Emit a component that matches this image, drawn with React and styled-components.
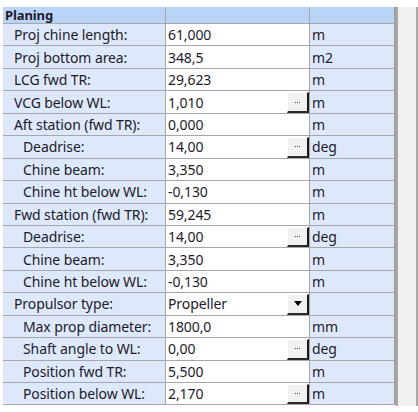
import React from "react";
import styled, { createGlobalStyle } from "styled-components";

// property grid for the planing hull inputs
const rows = [
  { label: "Proj chine length:", level: 1, value: "61,000", unit: "m" },
  { label: "Proj bottom area:", level: 1, value: "348,5", unit: "m2" },
  { label: "LCG fwd TR:", level: 1, value: "29,623", unit: "m" },
  { label: "VCG below WL:", level: 1, value: "1,010", unit: "m", edit: "dots" },
  { label: "Aft station (fwd TR):", level: 1, value: "0,000", unit: "m" },
  { label: "Deadrise:", level: 2, value: "14,00", unit: "deg", edit: "dots" },
  { label: "Chine beam:", level: 2, value: "3,350", unit: "m" },
  { label: "Chine ht below WL:", level: 2, value: "-0,130", unit: "m" },
  { label: "Fwd station (fwd TR):", level: 1, value: "59,245", unit: "m" },
  { label: "Deadrise:", level: 2, value: "14,00", unit: "deg", edit: "dots" },
  { label: "Chine beam:", level: 2, value: "3,350", unit: "m" },
  { label: "Chine ht below WL:", level: 2, value: "-0,130", unit: "m" },
  { label: "Propulsor type:", level: 1, value: "Propeller", unit: "", edit: "drop" },
  { label: "Max prop diameter:", level: 2, value: "1800,0", unit: "mm" },
  { label: "Shaft angle to WL:", level: 2, value: "0,00", unit: "deg", edit: "dots" },
  { label: "Position fwd TR:", level: 2, value: "5,500", unit: "m" },
  { label: "Position below WL:", level: 2, value: "2,170", unit: "m", edit: "dots" },
];

const GlobalStyle = createGlobalStyle`
  body {
    margin: 0;
    background: #ffffff;
    font-family: "Noto Sans", "DejaVu Sans", sans-serif;
  }
`;

const Page = styled.div`
  display: flex;
  align-items: flex-start;
  padding: 7px 0 0 3px;
  width: 418px;
  height: 412px;
  box-sizing: border-box;
`;

const Sheet = styled.div`
  display: grid;
  grid-template-columns: 163px 144px 86px;
  grid-template-rows: 17px;
  grid-auto-rows: 22.45px;
  width: 393px;
`;

const Scroll = styled.div`
  width: 19px;
  height: 399px;
  background: #f0f0f0;
  border-left: 2px solid #a8a8a8;
  border-right: 2px solid #a8a8a8;
`;

const Cell = styled.div`
  box-sizing: border-box;
  display: flex;
  align-items: center;
  border-right: 1px solid #a7a7a7;
  border-bottom: 1px solid #a7a7a7;
  font-size: ${(p) => (p.$bold ? "13px" : "14px")};
  letter-spacing: -0.1px;
  color: #1e1a2a;
  white-space: nowrap;
  overflow: hidden;
  background: ${(p) =>
    p.$head ? "#bad4f8" : p.$kind === "value" ? "#ffffff" : "#dde9fb"};
  padding-left: ${(p) =>
    p.$kind === "label" ? `${p.$level === 2 ? 20 : p.$level === 1 ? 11 : 2}px` : "2px"};
  font-weight: ${(p) => (p.$bold ? 700 : 400)};
  &:nth-child(3n) {
    border-right: 2px solid #a0a0a0;
  }
`;

const ValueText = styled.span`
  flex: 1;
`;

const EditButton = styled.div`
  box-sizing: border-box;
  align-self: stretch;
  width: 22px;
  margin: 1px 0 0 0;
  display: flex;
  align-items: center;
  justify-content: center;
  background: #f1f1f1;
  border-top: 1px solid #ffffff;
  border-left: 1px solid #ffffff;
  border-right: 2px solid #1a1a1a;
  border-bottom: 2px solid #2a2a2a;
`;

// three tiny dots of the "..." button
const Dots = styled.span`
  width: 1px;
  height: 1px;
  background: #444;
  box-shadow: -2px 0 0 #444, 2px 0 0 #444;
`;

const Arrow = styled.span`
  width: 0;
  height: 0;
  border-left: 4px solid transparent;
  border-right: 4px solid transparent;
  border-top: 5px solid #000;
`;

export default function App() {
  return (
    <Page>
      <GlobalStyle />
      <Sheet>
        <Cell $head $kind="label" $bold>
          Planing
        </Cell>
        <Cell $head />
        <Cell $head />
        {rows.map((r, i) => (
          <React.Fragment key={i}>
            <Cell $kind="label" $level={r.level}>
              {r.label}
            </Cell>
            <Cell $kind="value">
              <ValueText>{r.value}</ValueText>
              {r.edit === "dots" && (
                <EditButton>
                  <Dots />
                </EditButton>
              )}
              {r.edit === "drop" && (
                <EditButton>
                  <Arrow />
                </EditButton>
              )}
            </Cell>
            <Cell $kind="unit">{r.unit}</Cell>
          </React.Fragment>
        ))}
      </Sheet>
      <Scroll />
    </Page>
  );
}
